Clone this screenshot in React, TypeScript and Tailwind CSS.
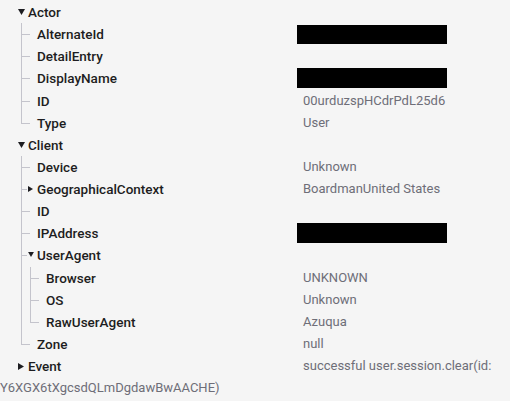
import type { ReactNode } from "react"

type Node = {
  label: string
  value?: string
  redacted?: number
  open?: boolean
  children?: Node[]
}

const actor: Node = {
  label: "Actor",
  open: true,
  children: [
    { label: "AlternateId", redacted: 19 },
    { label: "DetailEntry" },
    { label: "DisplayName", redacted: 20 },
    { label: "ID", value: "00urduzspHCdrPdL25d6" },
    { label: "Type", value: "User" },
  ],
}

const client: Node = {
  label: "Client",
  open: true,
  children: [
    { label: "Device", value: "Unknown" },
    { label: "GeographicalContext", value: "BoardmanUnited States", open: false, children: [] },
    { label: "ID" },
    { label: "IPAddress", redacted: 20 },
    {
      label: "UserAgent",
      open: true,
      children: [
        { label: "Browser", value: "UNKNOWN" },
        { label: "OS", value: "Unknown" },
        { label: "RawUserAgent", value: "Azuqua" },
      ],
    },
    { label: "Zone", value: "null" },
  ],
}

// triangulito del toggle, abajo si esta abierto
function Caret({ open, size = 7 }: { open?: boolean; size?: number }) {
  return open ? (
    <svg width={size} height={size - 1} viewBox="0 0 7 6" className="shrink-0">
      <path d="M0 0h7L3.5 6z" fill="#1d1d21" />
    </svg>
  ) : (
    <svg width={size - 1} height={size} viewBox="0 0 6 7" className="shrink-0">
      <path d="M0 0v7l6-3.5z" fill="#1d1d21" />
    </svg>
  )
}

function Value({ node }: { node: Node }) {
  if (node.redacted) {
    return <div className="ml-[-6px] w-[150px] bg-black" style={{ height: node.redacted }} />
  }
  return <span className="text-[13px] text-[#6e6e78]">{node.value}</span>
}

function Row({ node, children }: { node: Node; children: ReactNode }) {
  return (
    <div className="flex h-[22.125px] items-center">
      <div className="flex flex-1 items-center text-[13.5px] font-medium text-[#1d1d21]">{children}</div>
      <div className="flex w-[207px] items-center">
        <Value node={node} />
      </div>
    </div>
  )
}

function Child({ node, last }: { node: Node; last: boolean }) {
  const branch = node.children !== undefined
  return (
    <div className="flex">
      <div className="relative w-[16px] shrink-0">
        <div className={`absolute left-0 top-0 w-px bg-[#c4c4cc] ${last ? "h-[11px]" : "h-full"}`} />
        <div className={`absolute left-0 top-[11px] h-px bg-[#c4c4cc] ${branch ? "w-[6px]" : "w-[9px]"}`} />
        {branch && (
          <div className="absolute left-[7px] top-[8px]">
            <Caret open={node.open} size={6} />
          </div>
        )}
      </div>
      <div className="flex-1">
        <Row node={node}>{node.label}</Row>
        {node.open && node.children && node.children.length > 0 && (
          <div className="ml-[-7px]">
            {node.children.map((c, i) => (
              <Child key={c.label} node={c} last={i === node.children!.length - 1} />
            ))}
          </div>
        )}
      </div>
    </div>
  )
}

function Group({ node }: { node: Node }) {
  return (
    <div>
      <Row node={node}>
        <div className="flex items-center gap-[3px] pl-[18px]">
          <Caret open={node.open} />
          <span>{node.label}</span>
        </div>
      </Row>
      <div className="ml-[21px]">
        {node.children!.map((c, i) => (
          <Child key={c.label} node={c} last={i === node.children!.length - 1} />
        ))}
      </div>
    </div>
  )
}

export default function App() {
  return (
    <div
      className="h-[401px] w-[510px] overflow-hidden bg-[#f5f5f5] pt-[1px] text-[13px] leading-[22px]"
      style={{ fontFamily: "Roboto, 'Liberation Sans', sans-serif" }}
    >
      <Group node={actor} />
      <Group node={client} />

      {/* event va en linea, el valor se corta y sigue desde la izquierda */}
      <div>
        <span className="inline-flex w-[303px] items-center gap-[4px] pl-[18px] align-top text-[13.5px] font-medium text-[#1d1d21]">
          <Caret />
          <span>Event</span>
        </span>
        <span className="text-[#6e6e78]">successful user.session.clear(id: Y6XGX6tXgcsdQLmDgdawBwAACHE)</span>
      </div>
    </div>
  )
}
